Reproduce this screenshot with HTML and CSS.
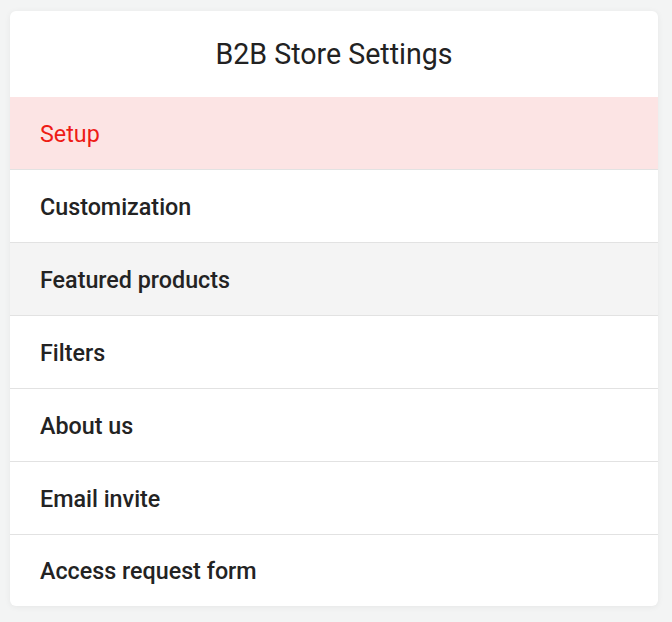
FILE: index.html
```html
<!DOCTYPE html>
<html>
<head>
<meta charset="utf-8">
<link rel="stylesheet" href="styles.css">
</head>
<body>
<div class="card">
  <div class="card-header">B2B Store Settings</div>
  <ul class="menu">
    <li class="item active">Setup</li>
    <li class="item">Customization</li>
    <li class="item hover">Featured products</li>
    <li class="item">Filters</li>
    <li class="item">About us</li>
    <li class="item">Email invite</li>
    <li class="item">Access request form</li>
  </ul>
</div>
</body>
</html>
```

FILE: styles.css
```css
html, body {
  margin: 0;
  padding: 0;
  background: #f3f4f4;
  font-family: Roboto, "Liberation Sans", sans-serif;
}
body {
  padding: 11px 14px 16px 10px;
}
.card {
  background: #fff;
  border-radius: 6px;
  box-shadow: 0 1px 6px rgba(0,0,0,0.06);
  overflow: hidden;
}
.card-header {
  height: 86px;
  display: flex;
  align-items: center;
  justify-content: center;
  font-size: 28.6px;
  color: #222;
  font-weight: 400;
}
.menu {
  list-style: none;
  margin: 0;
  padding: 0;
}
.item {
  height: 72px;
  display: flex;
  align-items: center;
  padding: 1px 0 0 30px;
  box-sizing: border-box;
  height: 73px;
  font-size: 23.3px;
  font-weight: 500;
  color: #232323;
  border-top: 1px solid #e2e2e2;
}
.item:first-child {
  border-top: none;
  height: 72px;
}
.item.active {
  background: #fce4e4;
  color: #ee1c16;
  font-weight: 400;
}
.item.hover {
  background: #f4f4f4;
}
.item:last-child {
  height: 72px;
}
```
